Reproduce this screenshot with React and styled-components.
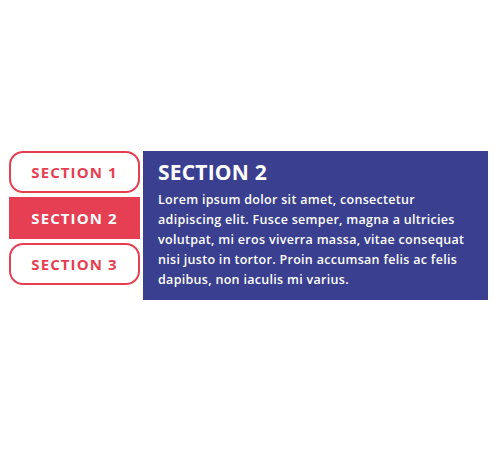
import React, { useState } from "react";
import styled, { createGlobalStyle } from "styled-components";

const GlobalStyle = createGlobalStyle`
  body {
    margin: 0;
    background: #ffffff;
    font-family: "Open Sans", "Noto Sans", sans-serif;
  }
`;

const Wrapper = styled.div`
  display: flex;
  align-items: flex-start;
  gap: 3px;
  padding: 151px 12px 0 9px;
`;

const TabList = styled.div`
  display: flex;
  flex-direction: column;
  gap: 4px;
  width: 131px;
  flex-shrink: 0;
`;

const Tab = styled.button`
  height: 42px;
  box-sizing: border-box;
  border: 2px solid #e63e52;
  border-radius: ${(p) => (p.active ? "0" : "14px")};
  background: ${(p) => (p.active ? "#e63e52" : "#ffffff")};
  color: ${(p) => (p.active ? "#ffffff" : "#e63e52")};
  font-family: "Open Sans", "Noto Sans", sans-serif;
  font-size: 15px;
  font-weight: 700;
  letter-spacing: 1.1px;
  padding: 0;
  cursor: pointer;
`;

const Panel = styled.div`
  flex: 1;
  background: #3a3f90;
  color: #ffffff;
  padding: 7px 15px 10px 15px;
  height: 149px;
  box-sizing: border-box;
`;

const Title = styled.h2`
  margin: 0 0 4px;
  font-size: 21px;
  font-weight: 700;
  letter-spacing: 0.2px;
`;

const Body = styled.p`
  margin: 0;
  font-size: 12.5px;
  font-weight: 600;
  line-height: 20px;
  letter-spacing: 0.3px;
`;

const loremText =
  "Lorem ipsum dolor sit amet, consectetur adipiscing elit. Fusce semper, magna a ultricies volutpat, mi eros viverra massa, vitae consequat nisi justo in tortor. Proin accumsan felis ac felis dapibus, non iaculis mi varius.";

const sections = [
  { title: "SECTION 1", text: loremText },
  { title: "SECTION 2", text: loremText },
  { title: "SECTION 3", text: loremText },
];

export default function App() {
  const [current, setCurrent] = useState(1);
  const section = sections[current];

  return (
    <>
      <GlobalStyle />
      <Wrapper>
        <TabList>
          {sections.map((s, i) => (
            <Tab key={s.title} active={i === current} onClick={() => setCurrent(i)}>
              {s.title}
            </Tab>
          ))}
        </TabList>
        <Panel>
          <Title>{section.title}</Title>
          <Body>{section.text}</Body>
        </Panel>
      </Wrapper>
    </>
  );
}
